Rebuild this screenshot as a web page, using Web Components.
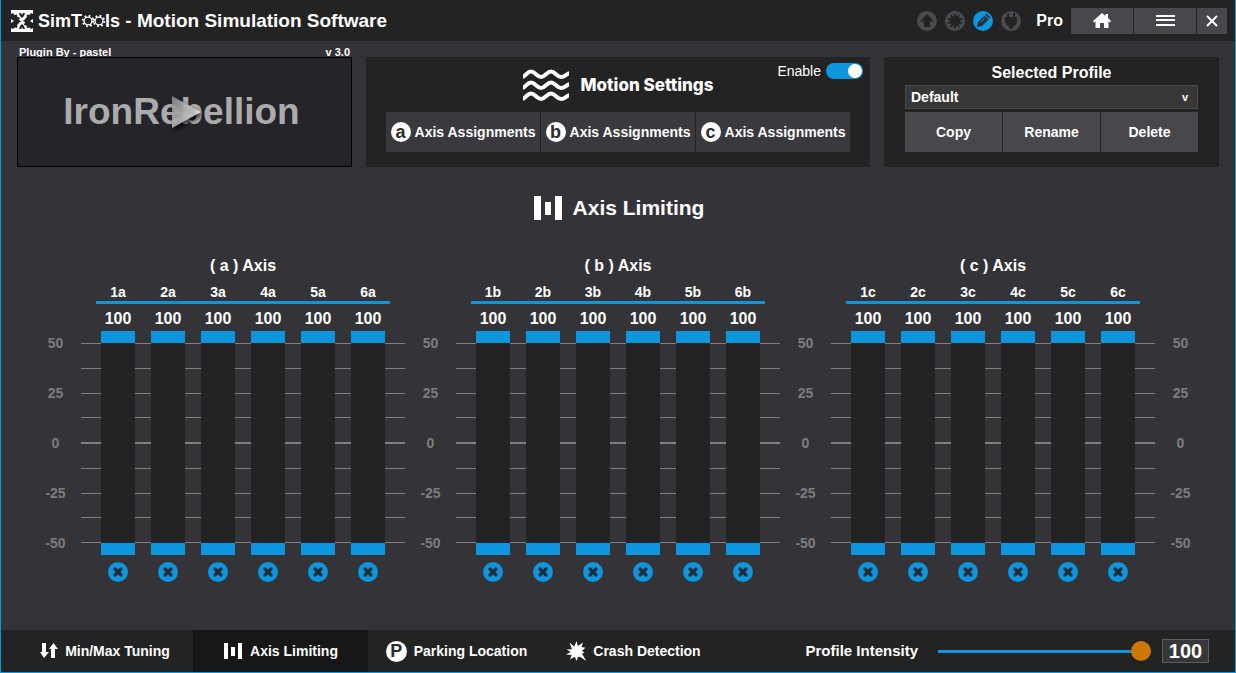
<!DOCTYPE html>
<html lang="en">
<head>
<meta charset="utf-8">
<title>SimTools - Motion Simulation Software</title>
<style>
  html { --blue:#0d96de; --bar:#232323; --bg:#343338; --key:#47474c; }
  body { margin:0; background:var(--bg); color:#fff; font-family:"Liberation Sans",Arial,sans-serif; }
</style>
</head>
<body>
<sim-app></sim-app>
<script>
const base = `*{box-sizing:border-box}
button{font:inherit;color:inherit;border:0;padding:0;margin:0;cursor:pointer}
h1,h2,h3{margin:0;font-size:inherit}
svg{display:block}`;

function define(name, html, setup) {
  const t = document.createElement('template');
  customElements.define(name, class extends HTMLElement {
    connectedCallback() {
      if (this.shadowRoot) return;
      t.innerHTML = typeof html === 'function' ? html(this) : html;
      const root = this.attachShadow({ mode: 'open' });
      root.innerHTML = '<style>' + base + '</style>';
      root.append(t.content.cloneNode(true));
      if (setup) setup(this, root);
    }
  });
}

/* Regular star with n points, centred on cx, cy */
const star = (cx, cy, n, R, r) => Array.from({ length: n * 2 }, (_, i) => {
  const a = Math.PI * i / n - Math.PI / 2, d = i % 2 ? r : R;
  return (cx + d * Math.cos(a)).toFixed(2) + ',' + (cy + d * Math.sin(a)).toFixed(2);
}).join(' ');

const bars = '<path fill="#fff" d="M0 0h7v24H0zM11 6h6v13h-6zM21 0h7v24h-7z"/>';
const wave = y => `M-1 ${y + 5.5}C3 ${y + 5} 4 ${y} 8 ${y}s6 5.500 10 5.500 6-5.500 10-5.500 6 5.500 10 5.500 5-3 9-4`;

/* Small outlined cog that stands in for a letter */
const cog = (cx) => `<circle cx="${cx}" cy="8" r="3.900" fill="none" stroke="#fff" stroke-width="1.300"/><circle cx="${cx}" cy="8" r="5.200" fill="none" stroke="#fff" stroke-width="2" stroke-dasharray="1.700 2.384"/>`;

define('round-badge', `
<style>
:host{display:inline-flex;align-items:center;justify-content:center;flex:none;width:20px;height:20px;border-radius:50%;background:#fff;color:#2b2b2e;font:bold 18px/20px "Liberation Sans",Arial,sans-serif}
:host([size=lg]){width:21px;height:21px}
</style><slot></slot>`);

define('title-bar', `
<style>
:host{display:flex;align-items:center;height:41px;background:var(--bar);padding:0 8px 0 10px}
.logo{margin-right:5px}
h1{display:flex;align-items:baseline;font:bold 19px/24px "Liberation Sans",Arial,sans-serif;white-space:pre;flex:1}
h1 b{font-size:18px}
.status{display:flex;gap:8px;margin-right:15px}
.pro{font:bold 16px/20px "Liberation Sans",Arial,sans-serif;margin-right:8px}
nav{display:flex;gap:1px}
button{width:62px;height:26px;background:var(--key);display:grid;place-items:center}
button:last-child{width:30px}
</style>
<svg class="logo" width="22" height="22" viewBox="0 0 22 22">
 <path fill="#fff" d="M0 0h22v22H0z"/>
 <g fill="#232323">
 <path d="M0 4l2-1 1.500 2L6 4.500 6.500 7l2.500.5-.5 2.500 2 1-2 1.500.5 2.500-2.500.5L6 18l-2.500-.5L2 19l-2-1z"/>
 <path d="M22 4l-2-1-1.500 2-2.500-.5-.5 2.500-2.500.5.5 2.500-2 1 2 1.500-.5 2.500 2.500.5.5 2.500 2.500-.5L20 19l2-1z"/>
 <path d="M8 3h2l1 2 1-2h2l-1 3-2 2-2-2zM8 19h2l1-2 1 2h2l-1-3-2-2-2 2z"/></g>
 <path d="M0 9l3 2-3 2zM22 9l-3 2 3 2zM6 15l3-3 1 2-2 3zM16 7l-3 3-1-2 2-3zM9 8l2 1-1 2-2-1zM13 14l-2-1 1-2 2 1z" fill="#fff"/>
</svg>
<h1><b>SimT</b><svg width="23" height="14" viewBox="0 0 23 14" overflow="visible" role="img" aria-label="oo">${cog(6)}${cog(17)}</svg><b>ls</b> - Motion Simulation Software</h1>
<div class="status">
 <svg width="20" height="20"><circle cx="10" cy="10" r="10" fill="#4a4a50"/><path fill="#232323" d="M10 3l7 7.500h-4V16H7v-5.500H3z"/></svg>
 <svg width="20" height="20"><circle cx="10" cy="10" r="10" fill="#4a4a50"/><polygon fill="#232323" points="${star(10, 10, 10, 8.5, 4.8)}"/></svg>
 <svg width="20" height="20"><circle cx="10" cy="10" r="10" fill="#0d96de"/><path fill="#232f38" d="M4 16l1-5 6.500-6.500 4 4L9 15zM12.300 3.700L13.500 2.500l4 4-1.200 1.200z"/><path stroke="#0d96de" d="M7.500 11.500l4-4"/></svg>
 <svg width="20" height="20"><circle cx="10" cy="10" r="10" fill="#4a4a50"/><path fill="#232323" d="M6 2h2v4h4V2h2v4h2v4c0 3-2 4.500-4 6l-1 2H9l-1-2c-2-1.500-4-3-4-6V6h2z"/></svg>
</div>
<span class="pro">Pro</span>
<nav>
 <button aria-label="Home"><svg width="18" height="15"><path fill="#fff" d="M9 0l3.500 3V1H15v4l3 3-1 1.400-1.500-1V15H11v-5H7v5H2.500V8.400L1 9.400 0 8z"/></svg></button>
 <button aria-label="Menu"><svg width="19" height="11"><path fill="#fff" d="M0 0h19v2H0zM0 4h19v2H0zM0 9h19v2H0z"/></svg></button>
 <button aria-label="Close"><svg width="12" height="12"><path stroke="#fff" stroke-width="2" d="M1 1l10 10M11 1L1 11"/></svg></button>
</nav>`);

define('plugin-card', `
<style>
:host{display:block}
.cap{display:flex;justify-content:space-between;height:16px;padding:4px 2px 0;overflow:hidden;font:bold 11px/14px "Liberation Sans",Arial,sans-serif}
.shot{display:grid;place-items:center;width:100%;height:110px;background:#242429;border:1px solid #000;color:#ababab;font:bold 37px/40px "Liberation Sans",Arial,sans-serif}
.shot>*{grid-area:1/1}
.shot>span{margin-right:6px}
svg{filter:drop-shadow(2px 3px 2px #000c);margin-left:2px}
</style>
<div class="cap"><slot name="author"></slot><slot name="version"></slot></div>
<button class="shot"><span><slot></slot></span><svg width="30" height="32"><defs><linearGradient id="g" x2="1" y2=".6"><stop stop-color="#8c8c8c"/><stop offset="1" stop-color="#f4f4f4"/></linearGradient></defs><path fill="url(#g)" fill-opacity=".85" d="M1 0l29 16L1 32z"/></svg></button>`);

define('motion-panel', `
<style>
:host{display:grid;grid-template-rows:55px 40px;background:var(--bar);height:110px;margin-top:16px;padding:0 20px}
.top{display:grid;grid-template-columns:1fr auto 1fr;align-items:center}
h2{grid-column:2;display:flex;align-items:center;gap:12px;font:800 17px/20px Inter,"Liberation Sans",Arial,sans-serif}
label{justify-self:end;align-self:start;display:flex;align-items:center;gap:5px;margin:6px -13px 0 0;font-size:14px;line-height:16px}
input{appearance:none;margin:0;width:37px;height:16px;border-radius:8px;background:#55555a;display:flex}
input::before{content:"";width:14px;height:14px;border-radius:50%;background:#fff;margin:1px}
input:checked{background:var(--blue);justify-content:flex-end}
.row{display:grid;grid-template-columns:repeat(3,1fr);gap:1px}
button{background:#3a393e;display:flex;align-items:center;justify-content:center;gap:4px;font:bold 14px/16px "Liberation Sans",Arial,sans-serif;white-space:nowrap}
</style>
<div class="top"><h2><svg width="46" height="32" fill="none" stroke="#fff" stroke-width="4"><path d="${wave(2.5)}${wave(13.5)}${wave(24.5)}"/></svg>Motion Settings</h2>
<label>Enable<input type="checkbox" role="switch" checked></label></div>
<div class="row">
<button><round-badge>a</round-badge>Axis Assignments</button><button><round-badge>b</round-badge>Axis Assignments</button><button><round-badge>c</round-badge>Axis Assignments</button>
</div>`);

define('profile-panel', `
<style>
:host{display:block;background:var(--bar);height:110px;margin-top:16px;padding:6px 21px 0}
label{display:block;text-align:center;font:bold 16px/20px "Liberation Sans",Arial,sans-serif}
.pick{display:grid;margin:2px 0 3px}
.pick>*{grid-area:1/1}
select{appearance:none;width:100%;height:24px;background:#373737;border:1px solid #4a4a4c;border-radius:0;color:#fff;padding:0 5px;font:bold 14px/20px "Liberation Sans",Arial,sans-serif}
span{justify-self:end;align-self:center;margin-right:10px;font:bold 11px/14px "Liberation Sans",Arial,sans-serif;pointer-events:none}
.row{display:grid;grid-template-columns:repeat(3,1fr);gap:1px}
button{height:40px;background:var(--key);font:bold 14px/16px "Liberation Sans",Arial,sans-serif}
</style>
<label for="p">Selected Profile</label>
<div class="pick"><select id="p"><option>Default</option></select><span aria-hidden="true">v</span></div>
<div class="row"><button>Copy</button><button>Rename</button><button>Delete</button></div>`);

define('limit-slider', `
<style>
:host{display:grid;width:34px;justify-items:center}
output{font:bold 16px/18px "Liberation Sans",Arial,sans-serif;margin:1px 0 3px}
.track{display:grid;width:34px;height:224px;padding:0;background:linear-gradient(#232323,#232323) center/34px 200px no-repeat}
input{grid-area:1/1;appearance:none;writing-mode:vertical-lr;direction:rtl;width:34px;height:224px;margin:0;background:none;pointer-events:none}
input::-webkit-slider-runnable-track{width:34px;height:224px;background:none}
input::-webkit-slider-thumb{appearance:none;width:34px;height:12px;background:var(--blue);border-radius:0;pointer-events:auto}
button{margin-top:7px;width:20px;height:20px;background:none}
</style>
<output>100</output>
<div class="track"><input type="range" min="-50" max="50" value="50" aria-label="Upper limit"><input type="range" min="-50" max="50" value="-50" aria-label="Lower limit"></div>
<button aria-label="Reset"><svg width="20" height="20"><circle cx="10" cy="10" r="10" fill="#0d96de"/><path stroke="#202b33" stroke-width="3.200" stroke-linecap="round" d="M7 7l6 6M13 7l-6 6"/></svg></button>`,
(host, root) => {
  const [hi, lo] = root.querySelectorAll('input'), out = root.querySelector('output');
  const show = () => out.value = hi.value - lo.value;
  hi.oninput = lo.oninput = show;
  root.querySelector('button').onclick = () => { hi.value = 50; lo.value = -50; show(); };
});

define('axis-group', host => {
  const a = host.getAttribute('axis'), n = [1, 2, 3, 4, 5, 6];
  return `
<style>
:host{display:block}
h3{text-align:center;font:bold 16px/18px "Liberation Sans",Arial,sans-serif}
.names{display:flex;justify-content:space-between;margin:9px 15px 5px;padding:0 5px 1px;border-bottom:3px solid var(--blue);font:bold 14px/16px "Liberation Sans",Arial,sans-serif}
.names span{width:34px;text-align:center}
.plot{display:grid}
.plot>*{grid-area:1/1}
.ticks{display:flex;flex-direction:column;justify-content:space-between;height:200px;margin-top:34px}
.ticks i{height:1px;background:#808083}
.ticks i:nth-child(5){height:2px}
.cols{display:flex;justify-content:space-between;padding:0 20px}
</style>
<h3>( ${a} ) Axis</h3>
<div class="names">${n.map(i => `<span>${i}${a}</span>`).join('')}</div>
<div class="plot"><div class="ticks">${'<i></i>'.repeat(9)}</div><div class="cols">${n.map(() => '<limit-slider></limit-slider>').join('')}</div></div>`;
});

define('axis-scale', `
<style>
:host{display:flex;flex-direction:column;justify-content:space-between;align-items:center;height:216px;margin-top:78px;color:#7d7d80;font:bold 14px/16px "Liberation Sans",Arial,sans-serif}
</style><span>50</span><span>25</span><span>0</span><span>-25</span><span>-50</span>`);

define('tab-bar', `
<style>
:host{display:flex;height:42px;background:var(--bar);align-items:stretch;padding-right:26px}
nav{display:flex;flex:1}
a{display:flex;align-items:center;justify-content:center;gap:7px;color:#fff;text-decoration:none;font:bold 14px/16px "Liberation Sans",Arial,sans-serif;width:175px;white-space:nowrap}
a:first-child{width:192px;padding-left:16px}
a[aria-current]{background:#171717}
a:nth-child(n+3){width:177px}
.level{display:flex;align-items:center}
label{font:bold 15px/18px "Liberation Sans",Arial,sans-serif;margin-right:20px}
input[type=range]{appearance:none;width:213px;height:20px;margin:0 11px 0 0;background:linear-gradient(var(--blue),var(--blue)) center/100% 3px no-repeat}
input[type=range]::-webkit-slider-thumb{appearance:none;width:20px;height:20px;border-radius:50%;background:#cc7700}
input[type=text]{width:47px;height:24px;padding:0;text-align:center;background:#373739;border:1px solid #5c5c63;color:#fff;font:bold 20px/20px "Liberation Sans",Arial,sans-serif}
</style>
<nav>
<a href="#tuning"><svg width="18" height="16"><path fill="#fff" d="M2 0h4v9h3l-5 6-4-6h2zM11 15h4V6h3l-4.500-6L9 6h2z"/></svg>Min/Max Tuning</a>
<a href="#limiting" aria-current="page"><svg width="20" height="16" viewBox="0 0 20 16"><path fill="#fff" d="M1 0h4v16H1zM8 4h4v9H8zM15 0h4v16h-4z"/></svg>Axis Limiting</a>
<a href="#parking"><round-badge size="lg">P</round-badge>Parking Location</a>
<a href="#crash"><svg width="20" height="20"><path fill="#fff" d="M10.500 0l1.300 5L17 1.500 15.500 6l4 .7-3.700 3.300 2.700 1.500-2.500 1.300L20.300 20l-6.300-4.300-2 .3-1.500 4-1.600-4.200L4 18.200l1.700-4.200L0 13.500l4.700-2.600L.5 8.500l5.500-.2L3.500 1.500l4.800 4z"/></svg>Crash Detection</a>
</nav>
<div class="level"><label for="r">Profile Intensity</label><input id="r" type="range" value="100"><input type="text" value="100" aria-label="Profile Intensity value"></div>`,
(host, root) => {
  const [r, t] = root.querySelectorAll('input');
  r.oninput = () => t.value = r.value;
  t.onchange = () => r.value = t.value;
});

define('sim-app', `
<style>
:host{display:flex;flex-direction:column;box-sizing:border-box;min-height:100vh;border:1px solid var(--blue);border-top:0;background:var(--bg)}
main{flex:1}
.cards{display:grid;grid-template-columns:335fr 504fr 335fr;gap:14px;padding:0 16px}
h2{display:flex;justify-content:center;align-items:center;gap:11px;margin-top:29px;padding-left:2px;font:bold 21px/24px "Liberation Sans",Arial,sans-serif}
.axes{display:grid;grid-template-columns:51px 1fr 51px 1fr 51px 1fr 51px;margin:37px 29px 24px}
</style>
<title-bar></title-bar>
<main>
<div class="cards">
<plugin-card><span slot="author">Plugin By - pastel</span><span slot="version">v 3.0</span>IronRebellion</plugin-card>
<motion-panel></motion-panel><profile-panel></profile-panel>
</div>
<h2><svg width="28" height="24">${bars}</svg>Axis Limiting</h2>
<div class="axes">
<axis-scale></axis-scale><axis-group axis="a"></axis-group><axis-scale></axis-scale><axis-group axis="b"></axis-group><axis-scale></axis-scale><axis-group axis="c"></axis-group><axis-scale></axis-scale>
</div>
</main>
<tab-bar></tab-bar>`);
</script>
</body>
</html>
